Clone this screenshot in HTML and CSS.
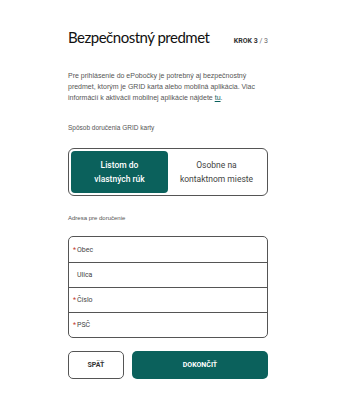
FILE: index.html
```html
<!DOCTYPE html>
<html lang="sk">
<head>
    <meta charset="UTF-8">
    <meta name="viewport" content="width=device-width, initial-scale=1.0">
    <title>Bezpečnostný predmet</title>
    <link rel="stylesheet" href="styles.css">
</head>
<body>
    <div class="page">
        <div class="header">
            <h1>Bezpečnostný predmet</h1>
            <span class="step">KROK 3 <span class="step-total">/ 3</span></span>
        </div>

        <p class="intro">Pre prihlásenie do ePobočky je potrebný aj bezpečnostný predmet, ktorým je GRID karta alebo mobilná aplikácia. Viac informácií k aktivácii mobilnej aplikácie nájdete&nbsp;<a href="#">tu</a>.</p>

        <div class="label">Spôsob doručenia GRID karty</div>
        <div class="toggle">
            <button class="toggle-option active">Listom do<br>vlastných rúk</button>
            <button class="toggle-option">Osobne na<br>kontaktnom mieste</button>
        </div>

        <div class="label small">Adresa pre doručenie</div>
        <div class="address">
            <div class="field"><span class="req">*</span>Obec</div>
            <div class="field"><span class="req-space"></span>Ulica</div>
            <div class="field"><span class="req">*</span>Číslo</div>
            <div class="field"><span class="req">*</span>PSČ</div>
        </div>

        <div class="actions">
            <button class="btn btn-back">SPÄŤ</button>
            <button class="btn btn-finish">DOKONČIŤ</button>
        </div>
    </div>
</body>
</html>
```

FILE: styles.css
```css
body {
    margin: 0;
    padding: 0;
    background-color: #fff;
    font-family: "Liberation Sans", Arial, sans-serif;
    color: #333;
}
.page {
    width: 200px;
    margin-left: 68px;
    padding-top: 28px;
}
.header {
    display: flex;
    justify-content: space-between;
    align-items: baseline;
}
h1 {
    font-family: Lato, sans-serif;
    font-size: 15px;
    font-weight: normal;
    letter-spacing: -0.5px;
    color: #111;
    margin: 0;
}
.step {
    font-family: Roboto, sans-serif;
    font-size: 7px;
    font-weight: bold;
    color: #333;
}
.step-total {
    font-weight: normal;
    color: #666;
}
.intro {
    font-size: 7px;
    line-height: 11px;
    color: #555;
    margin: 24px 0 0 0;
}
.intro a {
    color: #0b615c;
    text-decoration: underline;
}
.label {
    font-size: 6.5px;
    color: #555;
    margin-top: 21px;
}
.label.small {
    font-size: 6px;
    margin-top: 19px;
}
.toggle {
    display: flex;
    margin-top: 17px;
    height: 48px;
    box-sizing: border-box;
    border: 1px solid #555;
    border-radius: 6px;
    padding: 2px;
}
.toggle-option {
    flex: 1;
    border: none;
    background: none;
    font-family: Roboto, sans-serif;
    font-size: 8.5px;
    line-height: 14px;
    color: #444;
    border-radius: 4px;
    padding: 0;
}
.toggle-option.active {
    background-color: #0b615c;
    color: #fff;
    font-weight: 500;
}
.address {
    margin-top: 15px;
    border: 1px solid #555;
    border-radius: 5px;
}
.field {
    height: 24px;
    display: flex;
    align-items: center;
    padding-left: 4px;
    font-family: Roboto, sans-serif;
    font-size: 7px;
    color: #444;
    border-top: 1px solid #555;
}
.field:first-child {
    height: 25px;
    border-top: none;
}
.req {
    color: #c0392b;
    width: 4px;
}
.req-space {
    width: 4px;
}
.actions {
    display: flex;
    gap: 8px;
    margin-top: 13px;
}
.btn {
    height: 28px;
    border-radius: 5px;
    font-family: Roboto, sans-serif;
    font-size: 7px;
    font-weight: bold;
}
.btn-back {
    width: 56px;
    background: #fff;
    border: 1px solid #555;
    color: #333;
}
.btn-finish {
    flex: 1;
    background-color: #0b615c;
    border: none;
    color: #fff;
}
```
